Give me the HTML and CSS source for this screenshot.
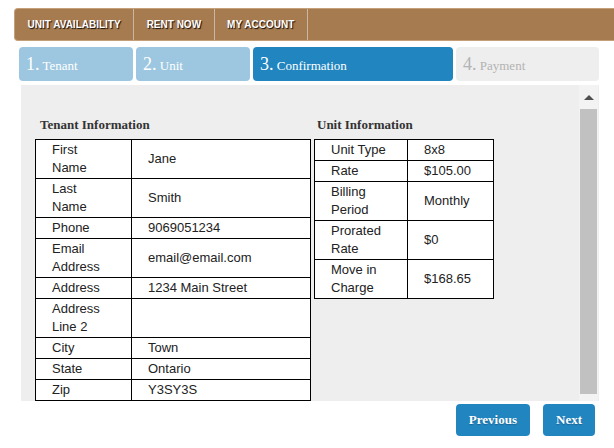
FILE: index.html
```html
<!DOCTYPE html>
<html lang="en">
  <head>
    <meta charset="UTF-8" />
    <meta name="viewport" content="width=device-width, initial-scale=1.0" />
    <title>Rent Now - Confirmation</title>
    <link rel="stylesheet" href="styles.css">
  </head>
  <body>
    <ul class="nav">
      <li>UNIT AVAILABILITY</li>
      <li>RENT NOW</li>
      <li>MY ACCOUNT</li>
    </ul>

    <div class="steps">
      <div class="step done"><span class="num">1.</span> Tenant</div>
      <div class="step done"><span class="num">2.</span> Unit</div>
      <div class="step active"><span class="num">3.</span> Confirmation</div>
      <div class="step todo"><span class="num">4.</span> Payment</div>
    </div>

    <div class="panel">
      <div class="panel-body">
        <div class="info tenant">
          <h4>Tenant Information</h4>
          <table>
            <tr><td>First Name</td><td>Jane</td></tr>
            <tr><td>Last Name</td><td>Smith</td></tr>
            <tr><td>Phone</td><td>9069051234</td></tr>
            <tr><td>Email Address</td><td>email@email.com</td></tr>
            <tr><td>Address</td><td>1234 Main Street</td></tr>
            <tr><td>Address Line 2</td><td></td></tr>
            <tr><td>City</td><td>Town</td></tr>
            <tr><td>State</td><td>Ontario</td></tr>
            <tr><td>Zip</td><td>Y3SY3S</td></tr>
          </table>
        </div>

        <div class="info unit">
          <h4>Unit Information</h4>
          <table>
            <tr><td>Unit Type</td><td>8x8</td></tr>
            <tr><td>Rate</td><td>$105.00</td></tr>
            <tr><td>Billing Period</td><td>Monthly</td></tr>
            <tr><td>Prorated Rate</td><td>$0</td></tr>
            <tr><td>Move in Charge</td><td>$168.65</td></tr>
          </table>
        </div>
      </div>

      <div class="scrollbar">
        <div class="arrow"></div>
        <div class="thumb"></div>
      </div>
    </div>

    <div class="actions">
      <button class="btn">Previous</button>
      <button class="btn">Next</button>
    </div>
  </body>
</html>
```

FILE: styles.css
```css
* {
  box-sizing: border-box;
}

body {
  margin: 0;
  background: #fff;
  font-family: "Liberation Sans", Arial, sans-serif;
  overflow: hidden;
}

/* top menu */
.nav {
  display: flex;
  list-style: none;
  margin: 8px 0 0 14px;
  padding: 0;
  height: 33px;
  background: #a67b50;
  border: 1px solid #c4a07a;
  border-right: none;
  border-radius: 4px 0 0 4px;
}

.nav li {
  padding: 0 12.5px;
  line-height: 31px;
  font-size: 10px;
  font-weight: bold;
  color: #fff;
  text-shadow: 1px 1px 1px rgba(0, 0, 0, 0.9);
  border-right: 1px solid #c9b7a3;
}

/* wizard steps */
.steps {
  display: flex;
  gap: 3px;
  margin: 6px 0 0 19px;
}

.step {
  height: 34px;
  line-height: 34px;
  padding: 0 7px;
  border-radius: 4px;
  font-family: "Liberation Serif", "Times New Roman", serif;
  font-size: 13px;
  color: #fff;
}

.step .num {
  font-size: 18px;
}

.step:nth-child(1),
.step:nth-child(2) {
  width: 114px;
}

.step:nth-child(3) {
  width: 200px;
}

.step:nth-child(4) {
  width: 143px;
}

.step.done {
  background: #9dc7e0;
}

.step.active {
  background: #2185c0;
}

.step.todo {
  background: #eeeeee;
  color: #b3b3b3;
}

/* content panel */
.panel {
  display: flex;
  width: 578px;
  height: 316px;
  margin: 4px 0 0 21px;
  background: #eeeeee;
}

.panel-body {
  flex: 1;
  display: flex;
  align-items: flex-start;
  gap: 3px;
  padding: 33px 0 0 14px;
  overflow: hidden;
}

.info h4 {
  margin: 0 0 7px;
  font-family: "Liberation Serif", "Times New Roman", serif;
  font-size: 13px;
  line-height: 14px;
  color: #333;
}

.tenant h4 {
  padding-left: 5px;
}

.unit h4 {
  padding-left: 3px;
}

.info table {
  border-collapse: separate;
  border-spacing: 0;
  table-layout: fixed;
  background: #fff;
  border-left: 1px solid #000;
  border-top: 1px solid #000;
}

.info td {
  padding: 1px 4px 1px 16px;
  font-size: 13px;
  line-height: 18px;
  color: #222;
  border-right: 1px solid #000;
  border-bottom: 1px solid #000;
}

.tenant table {
  width: 276px;
}

.tenant td:first-child {
  width: 96px;
  padding-right: 20px;
}

.unit table {
  width: 180px;
}

.unit td:first-child {
  width: 93px;
  padding-right: 16px;
}

/* fake scrollbar */
.scrollbar {
  width: 19px;
  margin-right: 1px;
  background: #f3f3f3;
  display: flex;
  flex-direction: column;
}

.arrow {
  height: 24px;
  display: flex;
  align-items: center;
  justify-content: center;
}

.arrow::before {
  content: "";
  border-left: 5px solid transparent;
  border-right: 5px solid transparent;
  border-bottom: 5px solid #505050;
}

.thumb {
  height: 285px;
  margin: 0 1px;
  background: #c1c1c1;
}

/* buttons */
.actions {
  display: flex;
  justify-content: flex-end;
  gap: 13px;
  margin-top: 3px;
  padding-right: 19px;
}

.btn {
  height: 32px;
  padding: 0 13px;
  border: none;
  border-radius: 4px;
  background: #2185c0;
  color: #fff;
  font-family: "Liberation Serif", "Times New Roman", serif;
  font-size: 13px;
  font-weight: bold;
  text-shadow: 0 1px 1px rgba(0, 0, 0, 0.25);
  cursor: pointer;
}
```
